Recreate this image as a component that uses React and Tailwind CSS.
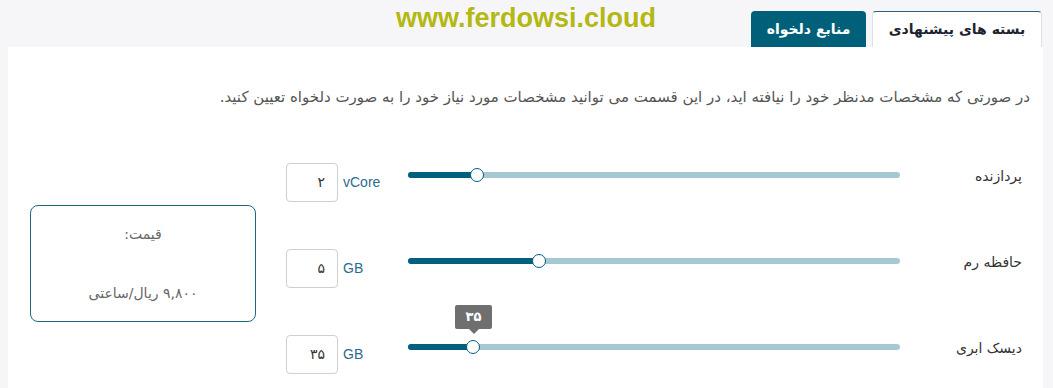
import React from "react";

const rows = [
  { label: "پردازنده", value: "۲", unit: "vCore", fill: 69 },
  { label: "حافظه رم", value: "۵", unit: "GB", fill: 131 },
  { label: "دیسک ابری", value: "۳۵", unit: "GB", fill: 65, tip: true },
];

function Slider({ fill, tip, value }) {
  return (
    <div className="relative w-[492px] h-[6px] mt-[9px] rounded-full bg-[#a6c8d2]" dir="ltr">
      <div className="h-full rounded-full bg-[#00607d]" style={{ width: fill }} />
      <div
        className="absolute top-1/2 w-[14px] h-[14px] -mt-[7px] -ml-[7px] rounded-full bg-white border-[1.5px] border-[#00607d]"
        style={{ left: fill }}
      />
      {tip && (
        <div className="absolute bottom-[16px] -ml-[18px] flex flex-col items-center" style={{ left: fill }}>
          <div className="w-[37px] h-[24px] rounded-[2px] bg-[#6f6f6f] text-white text-[13px] font-bold flex items-center justify-center">
            {value}
          </div>
          <div className="w-0 h-0 border-x-[5px] border-x-transparent border-t-[5px] border-t-[#6f6f6f]" />
        </div>
      )}
    </div>
  );
}

export default function App() {
  return (
    <div dir="rtl" className="w-[1053px] h-[388px] overflow-hidden bg-[#f6f6f8] font-['DejaVu_Sans',sans-serif] text-[#333]">
      {/* header */}
      <div className="h-[47px] flex items-end pr-[11px]">
        <button className="w-[170px] h-[36px] bg-white rounded-t-[4px] border border-b-0 border-[#dde1e4] border-t-[#2f6079] text-[14px] font-bold text-[#1d2430]">
          بسته های پیشنهادی
        </button>
        <button className="w-[115px] h-[36px] mr-[6px] bg-[#005f79] rounded-t-[4px] text-[14px] font-bold text-white">
          منابع دلخواه
        </button>
        <div dir="ltr" className="self-start mt-[1px] mr-[95px] font-['Liberation_Sans',sans-serif] font-bold text-[27px] leading-[34px] text-[#b4b812]">
          www.ferdowsi.cloud
        </div>
      </div>

      {/* panel */}
      <div className="ml-[8px] mr-[10px] h-[341px] bg-white">
        <p className="pt-[39px] pr-[13px] text-[15px] leading-[22px] text-[#555]">
          در صورتی که مشخصات مدنظر خود را نیافته اید، در این قسمت می توانید مشخصات مورد نیاز خود را به صورت دلخواه تعیین کنید.
        </p>

        <div className="flex mt-[55px] pr-[21px]">
          <div className="flex flex-col gap-[47px]">
            {rows.map((r) => (
              <div key={r.label} className="flex items-start h-[39px]">
                <div className="w-[122px] pt-[3px] text-[14px] leading-[20px] text-[#333]">{r.label}</div>
                <Slider fill={r.fill} tip={r.tip} value={r.value} />
                <div dir="ltr" className="w-[122px] flex items-center">
                  <div dir="rtl" className="w-[52px] h-[39px] rounded-[4px] border border-[#cfcfcf] flex items-center pr-[12px] text-[14px] text-[#333]">
                    {r.value}
                  </div>
                  <span className="ml-[5px] font-['Liberation_Sans',sans-serif] text-[14px] text-[#2b6d8c]">{r.unit}</span>
                </div>
              </div>
            ))}
          </div>

          <div className="mr-[30px] mt-[42px] w-[226px] h-[117px] rounded-[8px] border border-[#1c6b7d] flex flex-col items-center text-[14px] text-[#666]">
            <div className="mt-[18px]">قیمت:</div>
            <div className="mt-[38px]">۹,۸۰۰ ریال/ساعتی</div>
          </div>
        </div>
      </div>
    </div>
  );
}
